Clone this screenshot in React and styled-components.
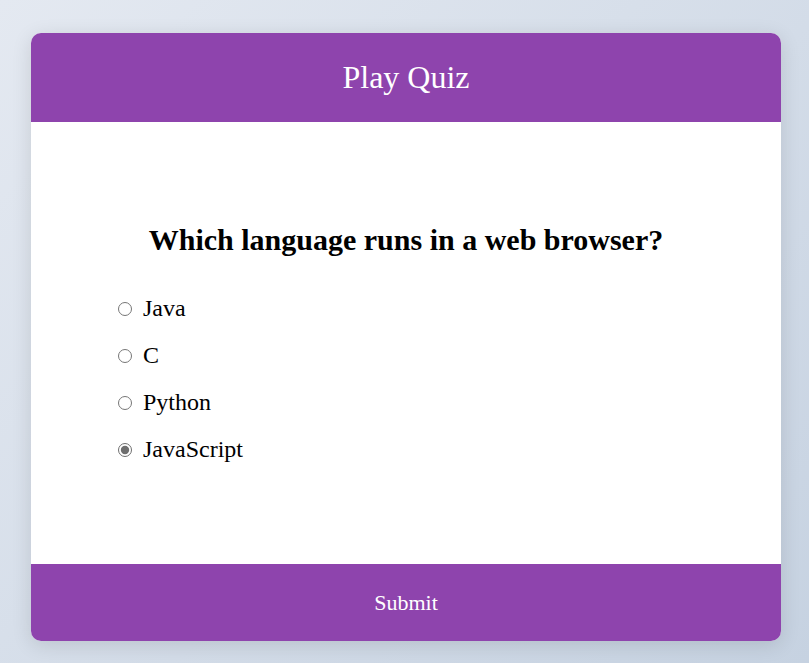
import React, { useState } from 'react';
import styled, { createGlobalStyle } from 'styled-components';

const GlobalStyle = createGlobalStyle`
  html, body {
    margin: 0;
    padding: 0;
  }
  body {
    min-height: 100vh;
    font-family: "Liberation Serif", "Times New Roman", serif;
    background: linear-gradient(135deg, #e4e9f1 0%, #c6d2e1 100%);
  }
`;

const Page = styled.div`
  min-height: 100vh;
  box-sizing: border-box;
  padding: 33px 28px 22px 31px;
`;

const Card = styled.div`
  width: 750px;
  height: 608px;
  display: flex;
  flex-direction: column;
  background: #ffffff;
  border-radius: 10px;
  overflow: hidden;
  box-shadow: 0 4px 20px rgba(0, 0, 0, 0.12);
`;

const Header = styled.div`
  height: 89px;
  flex-shrink: 0;
  display: flex;
  align-items: center;
  justify-content: center;
  background: #8e44ad;
  color: #ffffff;
  font-size: 32px;
`;

const Body = styled.div`
  flex: 1;
  display: flex;
  flex-direction: column;
  justify-content: center;
  padding: 10px 82px 0;
`;

const Question = styled.h2`
  margin: 0 0 28px;
  text-align: center;
  font-size: 30px;
  font-weight: bold;
  color: #000;
`;

const Options = styled.div`
  display: flex;
  flex-direction: column;
`;

const Option = styled.label`
  display: flex;
  align-items: center;
  height: 47px;
  font-size: 24px;
  color: #000;
  cursor: pointer;

  input {
    margin: 0 11px 0 5px;
    width: 14px;
    height: 14px;
    accent-color: #6e6e6e;
  }
`;

const SubmitButton = styled.button`
  height: 77px;
  flex-shrink: 0;
  border: none;
  background: #8e44ad;
  color: #ffffff;
  font-family: "Liberation Serif", "Times New Roman", serif;
  font-size: 22px;
  cursor: pointer;
`;

const options = ['Java', 'C', 'Python', 'JavaScript'];

export default function App() {
  const [answer, setAnswer] = useState('JavaScript');

  return (
    <>
      <GlobalStyle />
      <Page>
        <Card>
          <Header>Play Quiz</Header>
          <Body>
            <Question>Which language runs in a web browser?</Question>
            <Options>
              {options.map((opt) => (
                <Option key={opt}>
                  <input
                    type="radio"
                    name="quiz"
                    checked={answer === opt}
                    onChange={() => setAnswer(opt)}
                  />
                  {opt}
                </Option>
              ))}
            </Options>
          </Body>
          <SubmitButton>Submit</SubmitButton>
        </Card>
      </Page>
    </>
  );
}
